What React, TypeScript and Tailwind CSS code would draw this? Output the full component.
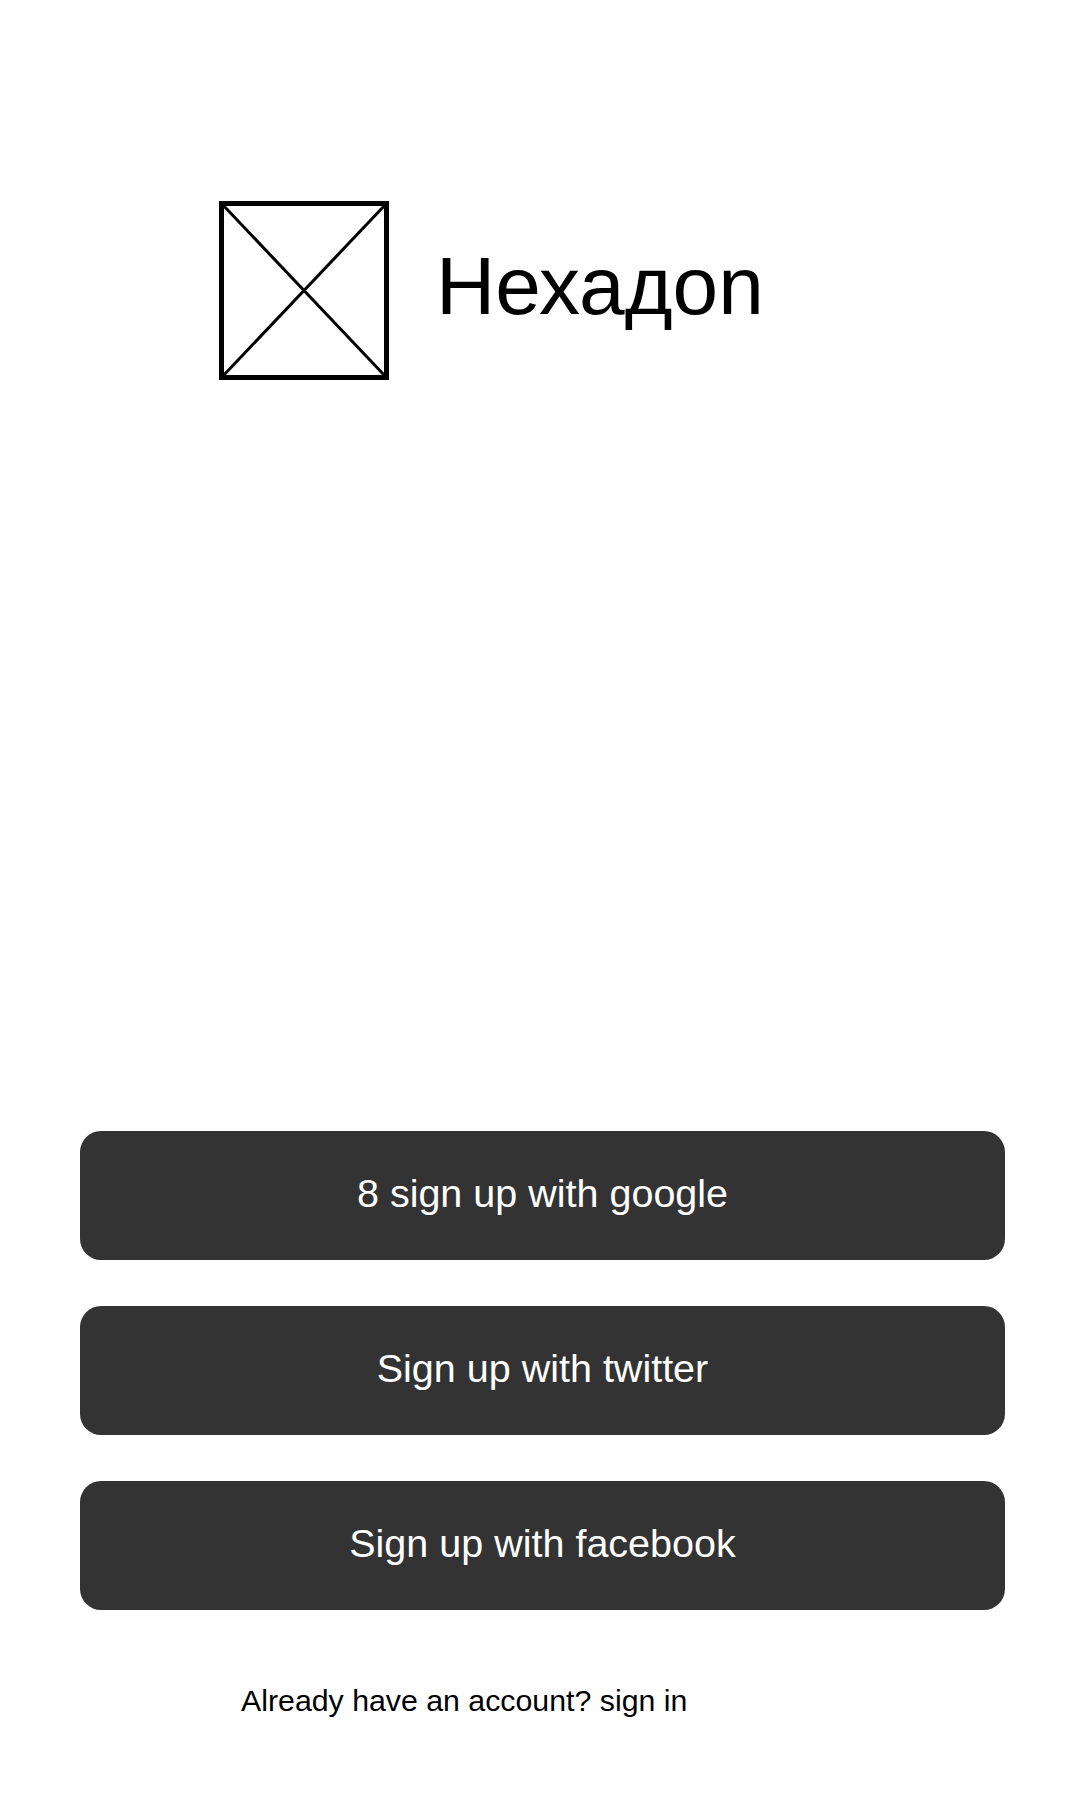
function LogoBox() {
  // placeholder image: box with a cross through it
  return (
    <svg width="170" height="179" viewBox="0 0 170 179" className="shrink-0">
      <rect x="2.5" y="2.5" width="165" height="174" fill="none" stroke="#000" strokeWidth="5" />
      <line x1="3" y1="3" x2="167" y2="176" stroke="#000" strokeWidth="3" />
      <line x1="167" y1="3" x2="3" y2="176" stroke="#000" strokeWidth="3" />
    </svg>
  );
}

function SignUpButton({ label }: { label: string }) {
  return (
    <button className="h-[129px] w-full rounded-[21px] bg-[#333333] pb-[3px] text-[39.5px] leading-none text-white">
      {label}
    </button>
  );
}

export default function App() {
  return (
    <div className="min-h-[1800px] w-[1080px] bg-white font-['Liberation_Sans',Arial,sans-serif] text-black">
      <div className="flex items-start pl-[219px] pt-[201px]">
        <LogoBox />
        <div className="ml-[47px] mt-[44px] text-[82px] leading-none">Нехадоn</div>
      </div>

      <div className="mt-[751px] flex flex-col gap-[46px] pl-[80px] pr-[75px]">
        <SignUpButton label="8 sign up with google" />
        <SignUpButton label="Sign up with twitter" />
        <SignUpButton label="Sign up with facebook" />
      </div>

      <div className="mt-[76px] pl-[241px] text-[30.3px] leading-none">
        Already have an account? sign in
      </div>
    </div>
  );
}
